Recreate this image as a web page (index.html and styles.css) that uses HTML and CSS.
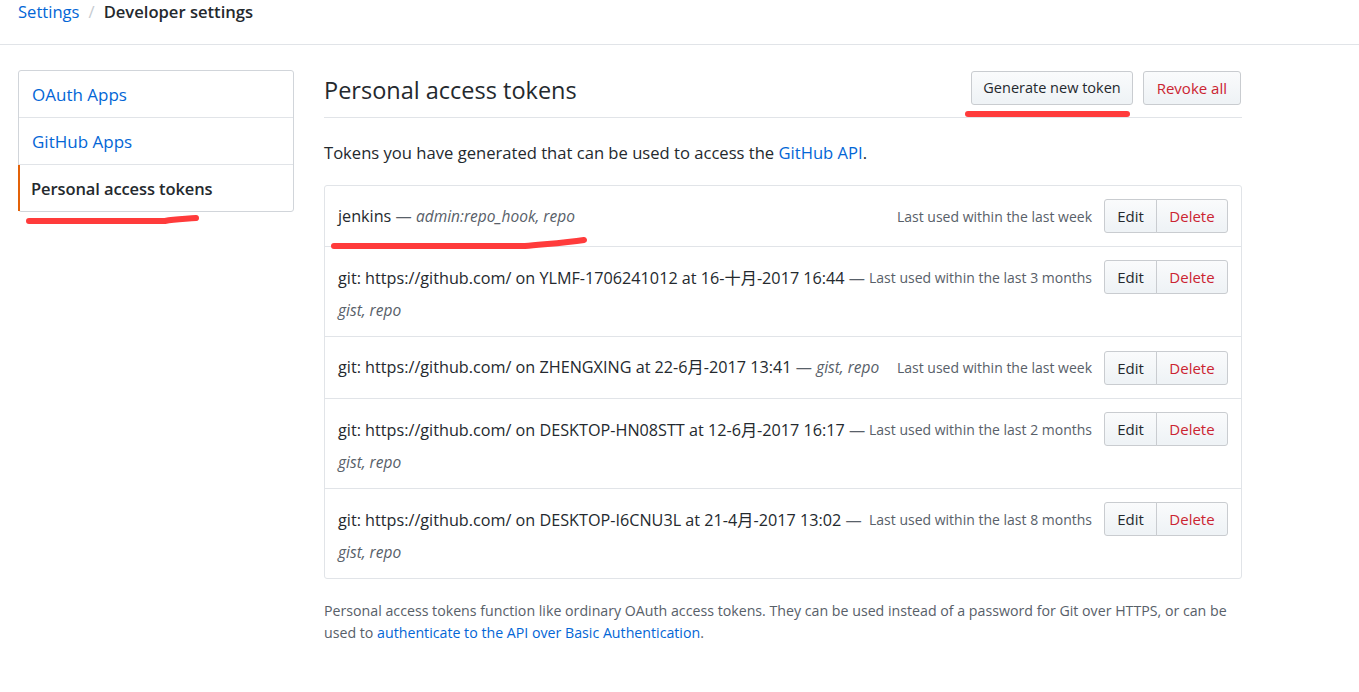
FILE: index.html
```html
<!DOCTYPE html>
<html>
<head>
<meta charset="utf-8">
<link rel="stylesheet" href="styles.css">
</head>
<body>
<div class="topbar">
  <a class="crumb-link" href="#">Settings</a><span class="crumb-sep">/</span><span class="crumb-current">Developer settings</span>
</div>
<div class="layout">
  <nav class="menu">
    <a class="menu-item" href="#">OAuth Apps</a>
    <a class="menu-item" href="#">GitHub Apps</a>
    <a class="menu-item selected" href="#">Personal access tokens</a>
  </nav>
  <main class="content">
    <div class="subhead">
      <h2 class="subhead-title">Personal access tokens</h2>
      <div class="subhead-actions">
        <button class="btn btn-generate">Generate new token</button>
        <button class="btn btn-danger">Revoke all</button>
      </div>
    </div>
    <p class="intro">Tokens you have generated that can be used to access the <a href="#">GitHub API</a>.</p>
    <div class="box">
      <div class="row row-single">
        <div class="row-desc"><span class="name">jenkins</span> <span class="dash">—</span> <em class="scopes">admin:repo_hook, repo</em></div>
        <div class="row-right"><span class="last-used">Last used within the last week</span><div class="btn-group"><button class="btn btn-sm">Edit</button><button class="btn btn-sm btn-danger">Delete</button></div></div>
      </div>
      <div class="row">
        <div class="row-desc"><span class="name">git: https://github.com/ on YLMF-1706241012 at 16-十月-2017 16:44</span> <span class="dash">—</span><br><em class="scopes">gist, repo</em></div>
        <div class="row-right"><span class="last-used">Last used within the last 3 months</span><div class="btn-group"><button class="btn btn-sm">Edit</button><button class="btn btn-sm btn-danger">Delete</button></div></div>
      </div>
      <div class="row row-single row-mid">
        <div class="row-desc"><span class="name">git: https://github.com/ on ZHENGXING at 22-6月-2017 13:41</span> <span class="dash">—</span> <em class="scopes">gist, repo</em></div>
        <div class="row-right"><span class="last-used">Last used within the last week</span><div class="btn-group"><button class="btn btn-sm">Edit</button><button class="btn btn-sm btn-danger">Delete</button></div></div>
      </div>
      <div class="row">
        <div class="row-desc"><span class="name">git: https://github.com/ on DESKTOP-HN08STT at 12-6月-2017 16:17</span> <span class="dash">—</span><br><em class="scopes">gist, repo</em></div>
        <div class="row-right"><span class="last-used">Last used within the last 2 months</span><div class="btn-group"><button class="btn btn-sm">Edit</button><button class="btn btn-sm btn-danger">Delete</button></div></div>
      </div>
      <div class="row">
        <div class="row-desc"><span class="name">git: https://github.com/ on DESKTOP-I6CNU3L at 21-4月-2017 13:02</span> <span class="dash">—</span><br><em class="scopes">gist, repo</em></div>
        <div class="row-right"><span class="last-used">Last used within the last 8 months</span><div class="btn-group"><button class="btn btn-sm">Edit</button><button class="btn btn-sm btn-danger">Delete</button></div></div>
      </div>
    </div>
    <p class="note">Personal access tokens function like ordinary OAuth access tokens. They can be used instead of a password for Git over HTTPS, or can be<br>used to <a href="#">authenticate to the API over Basic Authentication</a>.</p>
  </main>
</div>
<svg class="marks" width="1359" height="692" viewBox="0 0 1359 692">
  <path d="M29 221 L165 221 C175 219 186 219 196 218" />
  <path d="M968 114 L1127 114" />
  <path d="M334 246 L525 246 C545 244 565 243 584 240" />
</svg>
</body>
</html>
```

FILE: styles.css
```css
* { box-sizing: border-box; }
html, body { margin: 0; padding: 0; background: #fff; }
body {
  font-family: "Open Sans", "Noto Sans CJK SC", sans-serif;
  color: #24292e;
  position: relative;
  width: 1359px;
  min-height: 692px;
}
a { color: #0366d6; text-decoration: none; }

.topbar {
  height: 45px;
  border-bottom: 1px solid #e1e4e8;
  padding: 0 18px;
  font-size: 16.6px;
  line-height: 24px;
  display: flex;
  align-items: flex-start;
}
.crumb-sep { color: #c6cbd1; margin: 0 9px; }
.crumb-current { font-weight: 600; }

.layout {
  display: flex;
  gap: 30px;
  padding: 25px 0 0 18px;
}

.menu {
  width: 276px;
  flex: none;
  align-self: flex-start;
  border: 1px solid #d1d5da;
  border-radius: 3px;
  display: flex;
  flex-direction: column;
}
.menu-item {
  height: 47px;
  display: flex;
  align-items: center;
  padding: 0 13px;
  font-size: 17px;
  border-bottom: 1px solid #e1e4e8;
}
.menu-item:last-child { border-bottom: 0; height: 46px; }
.menu-item.selected {
  color: #24292e;
  font-weight: 600;
  font-size: 16.5px;
  letter-spacing: -0.1px;
  border-left: 2px solid #e36209;
  padding-left: 11px;
  margin-left: -1px;
}

.content { width: 918px; flex: none; }

.subhead {
  display: flex;
  justify-content: space-between;
  align-items: center;
  height: 48px;
  border-bottom: 1px solid #e1e4e8;
}
.subhead-title {
  margin: 0;
  font-size: 23.5px;
  font-weight: 400;
  line-height: 40px;
  padding-bottom: 8px;
}
.subhead-actions { display: flex; gap: 10px; padding-bottom: 12px; padding-right: 1px; }

.btn {
  font-family: inherit;
  font-size: 15px;
  color: #24292e;
  height: 34px;
  padding: 0 13px;
  border: 1px solid #c9ccd0;
  border-radius: 3px;
  background: linear-gradient(#fafbfc, #eff3f6 90%);
  cursor: pointer;
}
.btn-generate { font-size: 14.5px; padding: 0 11px; }
.btn-danger { color: #cb2431; }

.intro {
  margin: 20px 0 17px;
  font-size: 16.6px;
  line-height: 30px;
}

.box {
  border: 1px solid #e1e4e8;
  border-radius: 3px;
}
.row {
  display: flex;
  justify-content: space-between;
  align-items: flex-start;
  padding: 13px 13px;
  border-bottom: 1px solid #e1e4e8;
  height: 90px;
}
.row:last-child { border-bottom: 0; height: 89px; }
.row-single { height: 61px; align-items: center; padding-top: 0; padding-bottom: 0; }
.row-mid { height: 62px; }
.row-desc {
  font-size: 16.2px;
  line-height: 32px;
}
.row-single .row-desc { margin-top: -1px; }
.row:not(.row-single) .row-desc { margin-top: 2px; }
.dash { color: #586069; }
.scopes { color: #586069; font-style: italic; font-size: 15.5px; }
.row-right { display: flex; align-items: center; gap: 12px; }
.last-used { color: #586069; font-size: 14px; }
.btn-group { display: flex; }
.btn-sm { height: 34px; padding: 0 12px; font-size: 15px; }
.btn-group .btn:first-child { border-top-right-radius: 0; border-bottom-right-radius: 0; width: 53px; }
.btn-group .btn:last-child { border-top-left-radius: 0; border-bottom-left-radius: 0; margin-left: -1px; width: 72px; padding: 0; }

.note {
  margin: 21px 0 0;
  font-size: 14.2px;
  line-height: 22px;
  color: #586069;
}

.marks {
  position: absolute;
  left: 0;
  top: 0;
  pointer-events: none;
}
.marks path {
  fill: none;
  stroke: #ff3b3b;
  stroke-width: 6;
  stroke-linecap: round;
  stroke-linejoin: round;
}
```
